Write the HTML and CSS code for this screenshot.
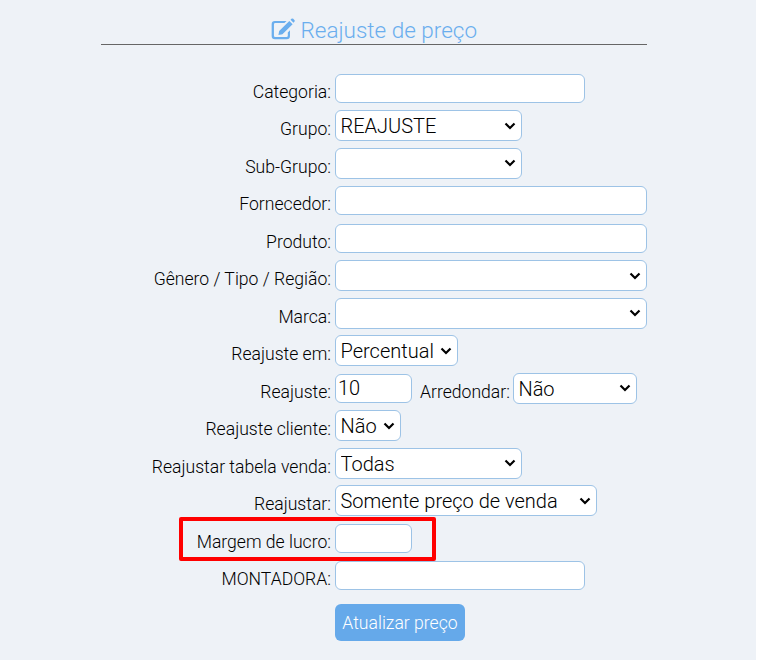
FILE: index.html
```html
<!DOCTYPE html>
<html lang="en">

<head>
    <meta charset="UTF-8">
    <title>Reajuste de preço</title>
    <link rel="stylesheet" href="styles.css">
</head>

<body>
    <div class="page">
        <div class="container">
            <!-- Title -->
            <h2 class="title">
                <svg class="title__icon" viewBox="0 0 22 20" aria-hidden="true">
                    <path d="M15.4 13.2v2.9a1.2 1.2 0 0 1-1.2 1.2H3.9a1.2 1.2 0 0 1-1.2-1.2V5.8a1.2 1.2 0 0 1 1.2-1.2h8.4l2-2H3.6A3 3 0 0 0 .6 5.6v10.800a3 3 0 0 0 3 3h10.800a3 3 0 0 0 3-3v-5.200z" />
                    <path d="M16.800 2.600l3 3-9.300 9.300-3.700.7.7-3.700zM17.900 1.500l.8-.8a1.200 1.200 0 0 1 1.700 0l1 1a1.200 1.200 0 0 1 0 1.700l-.8.8z" />
                </svg>
                Reajuste de preço
            </h2>

            <!-- Form -->
            <form class="form">
                <div class="row">
                    <label>Categoria:</label>
                    <input type="text" class="w-250">
                </div>
                <div class="row">
                    <label>Grupo:</label>
                    <select class="w-187"><option>REAJUSTE</option></select>
                </div>
                <div class="row">
                    <label>Sub-Grupo:</label>
                    <select class="w-187"><option></option></select>
                </div>
                <div class="row">
                    <label>Fornecedor:</label>
                    <input type="text" class="w-312">
                </div>
                <div class="row">
                    <label>Produto:</label>
                    <input type="text" class="w-312">
                </div>
                <div class="row">
                    <label>Gênero / Tipo / Região:</label>
                    <select class="w-312"><option></option></select>
                </div>
                <div class="row">
                    <label>Marca:</label>
                    <select class="w-312"><option></option></select>
                </div>
                <div class="row">
                    <label>Reajuste em:</label>
                    <select class="w-123"><option>Percentual</option></select>
                </div>
                <div class="row">
                    <label>Reajuste:</label>
                    <input type="text" class="w-77" value="10">
                    <span class="inline-label">Arredondar:</span>
                    <select class="w-124"><option>Não</option></select>
                </div>
                <div class="row">
                    <label>Reajuste cliente:</label>
                    <select class="w-66"><option>Não</option></select>
                </div>
                <div class="row">
                    <label>Reajustar tabela venda:</label>
                    <select class="w-187"><option>Todas</option></select>
                </div>
                <div class="row">
                    <label>Reajustar:</label>
                    <select class="w-262"><option>Somente preço de venda</option></select>
                </div>
                <div class="row highlight-row">
                    <label>Margem de lucro:</label>
                    <input type="text" class="w-77">
                    <div class="highlight"></div>
                </div>
                <div class="row">
                    <label>MONTADORA:</label>
                    <input type="text" class="w-250">
                </div>
                <div class="actions">
                    <button type="button">Atualizar preço</button>
                </div>
            </form>
        </div>
    </div>
</body>

</html>
```

FILE: styles.css
```css
html {
    background-color: #fff;
}

body {
    font-family: Roboto, Arial, sans-serif;
    font-weight: 300;
    margin: 0;
    color: #000;
}

.page {
    width: 756px;
    height: 660px;
    overflow: hidden;
    background-color: #eef2f7;
}

.container {
    width: 546px;
    margin-left: 101px;
    padding-top: 16px;
}

.title {
    color: #6aaeee;
    font-size: 22.500px;
    font-weight: 300;
    line-height: 28px;
    margin: 0;
    text-align: center;
    border-bottom: 1px solid #666;
}

.title__icon {
    width: 24px;
    height: 22px;
    fill: #6aaeee;
    vertical-align: -2px;
}

.form {
    margin-top: 24.500px;
}

.row {
    display: flex;
    align-items: center;
    height: 37.500px;
}

.row label {
    width: 230px;
    margin-right: 4px;
    padding-top: 7px;
    font-size: 17.600px;
    text-align: right;
}

.inline-label {
    margin: 0 3px 0 8px;
    padding-top: 7px;
    font-size: 17.600px;
}

input,
select {
    box-sizing: border-box;
    background-color: #fff;
    border: 1px solid #9dc3e6;
    border-radius: 6px;
    font-family: Roboto, Arial, sans-serif;
    font-weight: 300;
    font-size: 20px;
    color: #000;
}

input {
    height: 29px;
    padding: 0 2px;
}

select {
    height: 31px;
    padding: 1px 18px 0 4.500px;
    appearance: none;
    background-image: url("data:image/svg+xml,%3Csvg xmlns='http://www.w3.org/2000/svg' viewBox='0 0 12 8'%3E%3Cpath d='M1.500 1.500L6 6l4.500-4.500' fill='none' stroke='%23000' stroke-width='2.200'/%3E%3C/svg%3E");
    background-repeat: no-repeat;
    background-position: right 5px center;
    background-size: 12px 8px;
}

.w-66 { width: 66px; }
.w-77 { width: 77px; }
.w-123 { width: 123px; }
.w-124 { width: 124px; }
.w-187 { width: 187px; }
.w-250 { width: 250px; }
.w-262 { width: 262px; }
.w-312 { width: 312px; }

.highlight-row {
    position: relative;
}

.highlight {
    position: absolute;
    left: 77.500px;
    top: -2.500px;
    width: 257.500px;
    height: 44px;
    box-sizing: border-box;
    border: 4px solid #f00;
    border-radius: 2px;
}

.actions {
    margin: 9px 0 0 234px;
}

button {
    width: 130px;
    height: 37px;
    padding: 1px 0 0;
    background-color: #65a9ea;
    border: none;
    border-radius: 6px;
    color: #fff;
    font-family: Roboto, Arial, sans-serif;
    font-weight: 300;
    font-size: 17.600px;
}
```
